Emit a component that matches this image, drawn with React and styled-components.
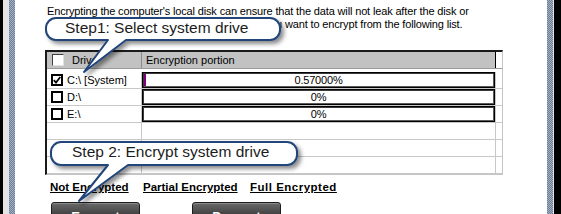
import React from 'react';
import styled, { createGlobalStyle } from 'styled-components';

const Global = createGlobalStyle`
  html, body { margin: 0; padding: 0; background: #fff; }
  body {
    width: 561px;
    height: 214px;
    overflow: hidden;
    font-family: "Liberation Sans", Arial, sans-serif;
  }
`;

const Window = styled.div`
  position: relative;
  display: flex;
  width: 561px;
  height: 214px;
  overflow: hidden;
  background: #fff;
`;

const FrameSide = styled.div`
  display: flex;
  flex: 0 0 auto;
`;

const FrameStrip = styled.div`
  flex: 0 0 ${(p) => p.$w}px;
  background-color: ${(p) => p.$color || '#8393ad'};
  background-image: ${(p) =>
    p.$dots
      ? 'conic-gradient(#a3b0c4 25%, #6e7e99 0 50%, #a3b0c4 0 75%, #6e7e99 0)'
      : 'none'};
  background-size: 2px 2px;
`;

const Content = styled.div`
  flex: 1;
  display: flex;
  flex-direction: column;
  background: #fff;
  color: #000;
`;

const Desc = styled.div`
  padding: 5px 0 0 32px;
  font-size: 11px;
  line-height: 13px;
  letter-spacing: -0.15px;
  white-space: nowrap;
`;

const Table = styled.div`
  margin: 19px 0 0 30px;
  width: 455px;
  border-left: 2px solid #1a1a1a;
  border-top: 2px solid #1a1a1a;
  border-right: 1px solid #c4c4c4;
  border-bottom: 1px solid #c4c4c4;
  font-size: 11px;
`;

const HeaderRow = styled.div`
  display: grid;
  grid-template-columns: 95px 354px 4px;
  height: 16px;
  border-bottom: 1px solid #9a9a9a;
`;

const HeadCell = styled.div`
  display: flex;
  align-items: center;
  gap: 8px;
  padding-left: ${(p) => p.$pad}px;
  background: ${(p) => (p.$blank ? '#fff' : '#c2c2c2')};
  border-right: ${(p) => p.$edge || 'none'};
  color: #000;
  white-space: nowrap;
`;

const HeadBox = styled.span`
  width: 10px;
  height: 10px;
  background: #fff;
  border: 1px solid #404040;
  border-right-color: #e0e0e0;
  border-bottom-color: #e0e0e0;
`;

const Row = styled.div`
  display: grid;
  grid-template-columns: 95px 354px 4px;
  height: 16px;
  padding-top: ${(p) => (p.$first ? 3 : 0)}px;
  border-bottom: 1px solid #c8c8c8;
`;

const Cell = styled.div`
  display: flex;
  align-items: center;
  gap: 4px;
  padding-left: ${(p) => p.$pad || 0}px;
  border-right: ${(p) => (p.$divider ? '1px solid #c8c8c8' : 'none')};
  white-space: nowrap;
  overflow: hidden;
`;

const Check = styled.span`
  flex: 0 0 auto;
  box-sizing: border-box;
  width: 12px;
  height: 12px;
  border: 2px solid #000;
  background: #fff;
  display: flex;
  align-items: center;
  justify-content: center;
`;

const Bar = styled.div`
  position: relative;
  box-sizing: border-box;
  width: 354px;
  height: 16px;
  border: 1px solid #000;
  box-shadow: inset 1px 1px 0 #3a3a3a, inset -1px -1px 0 #5a5a5a;
  background: #fff;
  display: flex;
  align-items: center;
  justify-content: center;
  font-size: 11px;
  letter-spacing: -0.2px;
`;

const BarFill = styled.span`
  position: absolute;
  left: 1px;
  top: 1px;
  bottom: 1px;
  background: #80007a;
`;

const BarText = styled.span`
  position: relative;
`;

const Legend = styled.div`
  margin: 5px 0 0 35px;
  display: grid;
  grid-template-columns: 93px 107px auto;
  font-size: 11.5px;
  font-weight: bold;
  line-height: 14px;
`;

const LegendItem = styled.span`
  text-decoration: underline;
  white-space: nowrap;
  letter-spacing: ${(p) => p.$spread || 0}px;
`;

const Buttons = styled.div`
  margin: 8px 0 0 36px;
  display: flex;
  gap: 52px;
`;

const Button = styled.button`
  display: block;
  box-sizing: border-box;
  width: 89px;
  height: 26px;
  padding: 2px 0 0;
  margin: 0;
  border: 1px solid #1c1c1c;
  border-radius: 3px;
  background: linear-gradient(#6a6a6a 0%, #444 45%, #2a2a2a 55%, #1e1e1e 100%);
  box-shadow: inset 0 1px 0 #8a8a8a;
  color: #fff;
  font-family: "Liberation Sans", Arial, sans-serif;
  font-weight: bold;
  font-size: 13px;
  line-height: 15px;
  text-align: center;
  vertical-align: top;
`;

const Overlay = styled.svg`
  position: absolute;
  left: 0;
  top: 0;
  width: 561px;
  height: 214px;
  pointer-events: none;
`;

const CalloutLabel = styled.div`
  position: absolute;
  left: ${(p) => p.$x}px;
  top: ${(p) => p.$y}px;
  font-family: "Liberation Sans", Arial, sans-serif;
  font-size: 15.5px;
  line-height: 16px;
  color: #1c1c1c;
  white-space: nowrap;
  pointer-events: none;
`;

function bubblePath({ x0, y0, x1, y1, r, b1, b2, tx, ty }) {
  return `M${x0 + r} ${y0} H${x1 - r} A${r} ${r} 0 0 1 ${x1} ${y0 + r} V${y1 - r} A${r} ${r} 0 0 1 ${x1 - r} ${y1} H${b2} L${tx} ${ty} L${b1} ${y1} H${x0 + r} A${r} ${r} 0 0 1 ${x0} ${y1 - r} V${y0 + r} A${r} ${r} 0 0 1 ${x0 + r} ${y0} Z`;
}

const callouts = [
  {
    text: 'Step1: Select system drive',
    lx: 65,
    ly: 20,
    shape: { x0: 46, y0: 18, x1: 280, y1: 40, r: 10, b1: 108, b2: 126, tx: 84, ty: 72 },
  },
  {
    text: 'Step 2: Encrypt system drive',
    lx: 72,
    ly: 144,
    shape: { x0: 51, y0: 142, x1: 297, y1: 165, r: 10, b1: 108, b2: 128, tx: 79, ty: 201 },
  },
];

const drives = [
  { label: 'C:\\ [System]', checked: true, pct: 0.57, text: '0.57000%' },
  { label: 'D:\\', checked: false, pct: 0, text: '0%' },
  { label: 'E:\\', checked: false, pct: 0, text: '0%' },
];

const CheckMark = () => (
  <svg width="8" height="8" viewBox="0 0 8 8">
    <path d="M0.8 4.2 L3 6.6 L7.3 1" fill="none" stroke="#000" strokeWidth="1.8" />
  </svg>
);

export default function App() {
  return (
    <>
      <Global />
      <Window>
        <FrameSide>
          <FrameStrip $w={3} $color="#000" />
          <FrameStrip $w={6} $color="#e4e4e4" />
          <FrameStrip $w={6} $dots />
        </FrameSide>
        <Content>
          <Desc>
            <div>Encrypting the computer's local disk can ensure that the data will not leak after the disk or</div>
            <div>computer is lost. Please select the disk drives you want to encrypt from the following list.</div>
          </Desc>
          <Table>
            <HeaderRow>
              <HeadCell $pad={5} $edge="1px solid #8a8a8a">
                <HeadBox />
                <span>Drive</span>
              </HeadCell>
              <HeadCell $pad={4} $edge="1px solid #000">
                Encryption portion
              </HeadCell>
              <HeadCell $blank />
            </HeaderRow>
            {drives.map((d, i) => (
              <Row key={d.label} $first={i === 0}>
                <Cell $pad={4} $divider>
                  <Check>{d.checked && <CheckMark />}</Check>
                  <span>{d.label}</span>
                </Cell>
                <Cell $divider>
                  <Bar>
                    {d.pct > 0 && (
                      <BarFill style={{ width: `${Math.max(2, (d.pct / 100) * 352)}px` }} />
                    )}
                    <BarText>{d.text}</BarText>
                  </Bar>
                </Cell>
                <Cell />
              </Row>
            ))}
            {[0, 1, 2].map((k) => (
              <Row key={`empty-${k}`}>
                <Cell $divider />
                <Cell $divider />
                <Cell />
              </Row>
            ))}
          </Table>
          <Legend>
            <LegendItem>Not Encrypted</LegendItem>
            <LegendItem>Partial Encrypted</LegendItem>
            <LegendItem $spread={0.5}>Full Encrypted</LegendItem>
          </Legend>
          <Buttons>
            <Button>Encrypt</Button>
            <Button>Decrypt</Button>
          </Buttons>
        </Content>
        <FrameSide>
          <FrameStrip $w={6} $dots />
          <FrameStrip $w={1} $color="#e4e4e4" />
          <FrameStrip $w={7} $color="#000" />
        </FrameSide>

        <Overlay viewBox="0 0 561 214">
          <defs>
            <linearGradient id="bubbleFill" x1="0" y1="0" x2="0" y2="1">
              <stop offset="0" stopColor="#ffffff" />
              <stop offset="0.7" stopColor="#ffffff" />
              <stop offset="1" stopColor="#e9edf4" />
            </linearGradient>
            <filter id="bubbleShadow" x="-10%" y="-30%" width="130%" height="180%">
              <feDropShadow dx="3" dy="3" stdDeviation="2" floodColor="#000" floodOpacity="0.45" />
            </filter>
          </defs>
          {callouts.map((c) => (
            <path
              key={c.text}
              d={bubblePath(c.shape)}
              fill="url(#bubbleFill)"
              stroke="#23457a"
              strokeWidth="2"
              strokeLinejoin="round"
              filter="url(#bubbleShadow)"
            />
          ))}
        </Overlay>
        {callouts.map((c) => (
          <CalloutLabel key={c.text} $x={c.lx} $y={c.ly}>
            {c.text}
          </CalloutLabel>
        ))}
      </Window>
    </>
  );
}
